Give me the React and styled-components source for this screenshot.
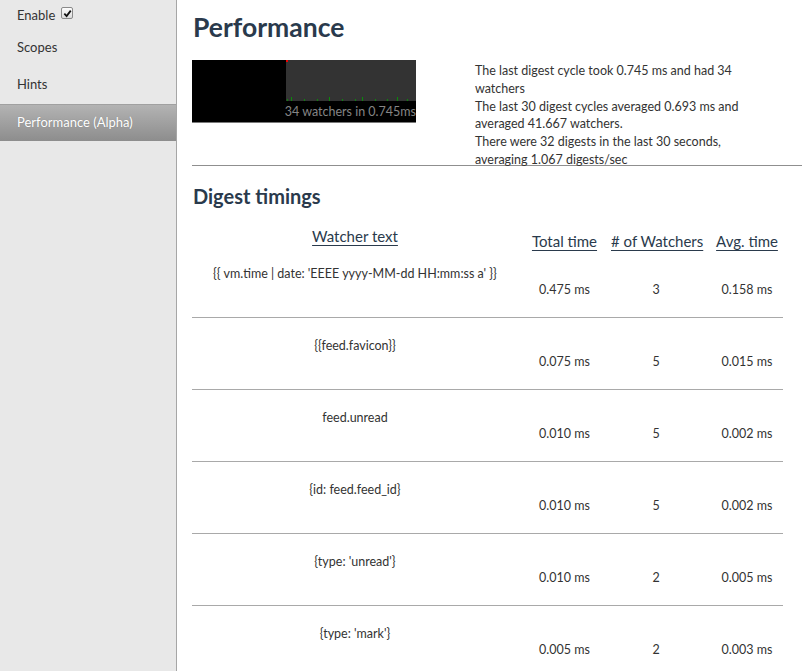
import React from "react";
import styled, { createGlobalStyle } from "styled-components";

const Global = createGlobalStyle`
  html, body { margin: 0; padding: 0; background: #fff; }
  body { font-family: Lato, "Open Sans", sans-serif; color: #333; }
  * { box-sizing: border-box; }
`;

const Shell = styled.div`
  display: flex;
  height: 671px;
  overflow: hidden;
`;

const Sidebar = styled.nav`
  width: 177px;
  flex: none;
  background: #e8e8e8;
  border-right: 1px solid #a6a6a6;
  display: flex;
  flex-direction: column;
`;

const NavItem = styled.div`
  height: ${(p) => (p.$first ? 30 : 37)}px;
  display: flex;
  align-items: center;
  gap: 6px;
  padding-left: 17px;
  padding-bottom: ${(p) => (p.$first ? 0 : 3)}px;
  font-size: 13px;
  color: ${(p) => (p.$active ? "#fff" : "#333")};
  background: ${(p) =>
    p.$active ? "linear-gradient(#b3b3b3, #8d8d8d)" : "transparent"};
  border-top: ${(p) => (p.$active ? "1px solid #a0a0a0" : "none")};
  text-shadow: ${(p) => (p.$active ? "0 0 1px rgba(0,0,0,0.25)" : "none")};
`;

const CheckBox = styled.span`
  width: 12px;
  height: 12px;
  border: 1px solid #8a8a8a;
  border-radius: 2px;
  background: linear-gradient(#fdfdfd, #dcdcdc);
  display: inline-flex;
  align-items: center;
  justify-content: center;
  margin-top: -4px;
`;

const Main = styled.main`
  flex: 1;
  padding: 0 0 0 15px;
  overflow: hidden;
`;

const Title = styled.h1`
  margin: 11px 0 0 1px;
  font-size: 26.5px;
  line-height: 32px;
  font-weight: 700;
  color: #2a3a4c;
`;

const Summary = styled.div`
  display: flex;
  align-items: flex-start;
  margin-top: 17px;
  border-bottom: 1px solid #8f8f8f;
  height: 106px;
`;

const Graph = styled.div`
  width: 224px;
  height: 63px;
  background: #000;
  border-bottom: 1px solid #7a7a7a;
  display: flex;
  flex-direction: column;
  align-items: flex-end;
`;

const Plot = styled.div`
  width: 130px;
  height: 41px;
  background: #333;
  display: flex;
`;

const GraphCaption = styled.div`
  font-size: 12.5px;
  line-height: 21px;
  color: #858585;
  white-space: nowrap;
`;

const Stats = styled.div`
  margin-left: 59px;
  margin-top: 2px;
  width: 272px;
  font-size: 12.5px;
  line-height: 17.8px;
  color: #333;
`;

const SubTitle = styled.h2`
  margin: 18px 0 0 1px;
  font-size: 20px;
  line-height: 24px;
  font-weight: 700;
  color: #2a3a4c;
`;

const Table = styled.div`
  width: 591px;
  margin-top: 15px;
`;

const cols = "326px 93px 90px 82px";

const HeadRow = styled.div`
  display: grid;
  grid-template-columns: ${cols};
  height: 23px;
  align-items: start;
`;

const HeadCell = styled.div`
  text-align: center;
  padding-top: ${(p) => (p.$lead ? 4 : 9)}px;
  padding-left: ${(p) => (p.$shift ? 10 : 0)}px;
  font-size: 15px;
  line-height: 18px;
  color: #2a3a4c;
  text-decoration: underline;
  text-underline-offset: 3px;
  white-space: nowrap;
`;

const Row = styled.div`
  display: grid;
  grid-template-columns: ${cols};
  align-items: start;
  height: 72px;
  border-bottom: 1px solid #a9a9a9;
`;

const Cell = styled.div`
  text-align: center;
  padding-top: ${(p) => (p.$lead ? 20 : 36)}px;
  padding-left: ${(p) => (p.$shift ? 10 : 0)}px;
  font-size: 12.5px;
  line-height: 16px;
  color: #333;
  white-space: nowrap;
`;

const Check = () => (
  <svg width="9" height="9" viewBox="0 0 10 10">
    <path d="M1.5 5.2 L4 7.8 L8.6 1.8" fill="none" stroke="#111" strokeWidth="2" />
  </svg>
);

const ticks = [0, 4, 17, 30, 42, 55, 68, 75, 88, 100, 110, 120];

const rows = [
  ["{{ vm.time | date: 'EEEE yyyy-MM-dd HH:mm:ss a' }}", "0.475 ms", "3", "0.158 ms"],
  ["{{feed.favicon}}", "0.075 ms", "5", "0.015 ms"],
  ["feed.unread", "0.010 ms", "5", "0.002 ms"],
  ["{id: feed.feed_id}", "0.010 ms", "5", "0.002 ms"],
  ["{type: 'unread'}", "0.010 ms", "2", "0.005 ms"],
  ["{type: 'mark'}", "0.005 ms", "2", "0.003 ms"],
];

export default function App() {
  return (
    <>
      <Global />
      <Shell>
        <Sidebar>
          <NavItem $first>
            Enable
            <CheckBox>
              <Check />
            </CheckBox>
          </NavItem>
          <NavItem>Scopes</NavItem>
          <NavItem>Hints</NavItem>
          <NavItem $active>Performance (Alpha)</NavItem>
        </Sidebar>
        <Main>
          <Title>Performance</Title>
          <Summary>
            <Graph>
              <Plot>
                <svg width="130" height="41" viewBox="0 0 130 41">
                  <rect x="0" y="0" width="2" height="2" fill="#e00" />
                  {ticks.map((t, i) => (
                    <rect
                      key={i}
                      x={t + 1}
                      y={i % 3 === 1 ? 37 : 39}
                      width="1"
                      height={i % 3 === 1 ? 4 : 2}
                      fill="#0a8a0a"
                    />
                  ))}
                </svg>
              </Plot>
              <GraphCaption>34 watchers in 0.745ms</GraphCaption>
            </Graph>
            <Stats>
              The last digest cycle took 0.745 ms and had 34 watchers
              <br />
              The last 30 digest cycles averaged 0.693 ms and averaged 41.667 watchers.
              <br />
              There were 32 digests in the last 30 seconds, averaging 1.067 digests/sec
            </Stats>
          </Summary>
          <SubTitle>Digest timings</SubTitle>
          <Table>
            <HeadRow>
              <HeadCell $lead>Watcher text</HeadCell>
              <HeadCell>Total time</HeadCell>
              <HeadCell># of Watchers</HeadCell>
              <HeadCell $shift>Avg. time</HeadCell>
            </HeadRow>
            {rows.map((r, i) => (
              <Row key={i}>
                <Cell $lead>{r[0]}</Cell>
                <Cell>{r[1]}</Cell>
                <Cell>{r[2]}</Cell>
                <Cell $shift>{r[3]}</Cell>
              </Row>
            ))}
          </Table>
        </Main>
      </Shell>
    </>
  );
}
